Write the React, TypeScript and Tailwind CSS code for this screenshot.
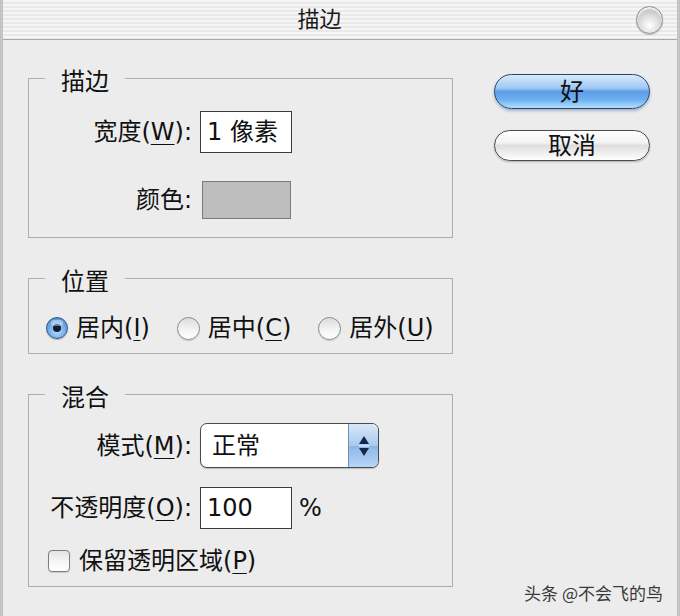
import React from "react";

type GroupBoxProps = {
  title: string;
  children: React.ReactNode;
  className?: string;
};

function GroupBox({ title, children, className = "" }: GroupBoxProps) {
  return (
    <fieldset className={`w-[425px] border border-[#adadad] ${className}`}>
      <legend className="ml-[16px] px-[16px] pt-[8px] text-[24px] leading-[28px] text-[#111]">
        {title}
      </legend>
      {children}
    </fieldset>
  );
}

function Mn({ children }: { children: React.ReactNode }) {
  return <span className="underline decoration-1 underline-offset-[4px]">{children}</span>;
}

function FieldLabel({ children }: { children: React.ReactNode }) {
  return (
    <div className="w-[163px] shrink-0 text-right text-[24px] leading-[28px] text-[#111]">
      {children}
    </div>
  );
}

function Radio({ checked }: { checked?: boolean }) {
  if (checked) {
    return (
      <span className="relative flex h-[22px] w-[22px] shrink-0 items-center justify-center rounded-full border border-[#34598a] bg-[radial-gradient(circle_at_50%_65%,#b9dcfb_0%,#6ea7e6_55%,#3f78c2_100%)] shadow-[0_1px_1px_rgba(0,0,0,0.25)]">
        <span className="h-[8px] w-[8px] rounded-full bg-[#0c1d3a]" />
        {/* gloss */}
        <span className="absolute left-[4px] top-[2px] h-[6px] w-[12px] rounded-full bg-white/40" />
      </span>
    );
  }
  return (
    <span className="relative h-[23px] w-[23px] shrink-0 rounded-full border border-[#8c8c8c] bg-[linear-gradient(to_bottom,#dcdcdc,#f3f3f3_55%,#ffffff)] shadow-[0_1px_1px_rgba(0,0,0,0.15)]" />
  );
}

function RadioItem({ checked, children }: { checked?: boolean; children: React.ReactNode }) {
  return (
    <div className="flex items-center gap-[8px]">
      <Radio checked={checked} />
      <span className="text-[24px] leading-[28px] text-[#111]">{children}</span>
    </div>
  );
}

export default function App() {
  return (
    <div className="relative h-[616px] w-[680px] overflow-hidden border-x-[3px] border-[#c4c4c4] bg-[#ececec] font-['DejaVu_Sans','Noto_Sans_CJK_SC',sans-serif]">
      {/* Title bar */}
      <div className="flex h-[40px] items-center border-b border-[#a8a8a8] bg-[repeating-linear-gradient(to_bottom,#f6f6f6_0px,#f6f6f6_2px,#e9e9e9_2px,#e9e9e9_4px)]">
        <div className="flex-1 text-center text-[22px] leading-[28px] text-[#1a1a1a]">描边</div>
        <div className="mr-[14px] h-[28px] w-[27px] rounded-full border border-[#8e8e8e] bg-[radial-gradient(circle_at_50%_70%,#ffffff_0%,#dcdcdc_45%,#a9a9a9_100%)] shadow-[inset_0_2px_2px_rgba(255,255,255,0.9),0_1px_1px_rgba(0,0,0,0.2)]" />
      </div>

      <div className="flex items-start pl-[25px]">
        {/* Left column */}
        <div className="flex flex-col gap-[22px] pt-[20px]">
          <GroupBox title="描边">
            <div className="flex flex-col pb-[18px] pt-[15px]">
              <div className="flex items-center gap-[8px]">
                <FieldLabel>
                  宽度(<Mn>W</Mn>):
                </FieldLabel>
                <div className="flex h-[42px] w-[92px] items-center border border-[#3c3c3c] bg-white pl-[6px] text-[24px] leading-[28px] text-[#111]">
                  1 像素
                </div>
              </div>
              <div className="mt-[28px] flex items-center gap-[10px]">
                <FieldLabel>颜色:</FieldLabel>
                <div className="h-[38px] w-[89px] border border-[#7a7a7a] bg-[#bdbdbd]" />
              </div>
            </div>
          </GroupBox>

          <GroupBox title="位置">
            <div className="flex items-center gap-[27px] pb-[11px] pl-[17px] pt-[18px]">
              <RadioItem checked>
                居内(<Mn>I</Mn>)
              </RadioItem>
              <RadioItem>
                居中(<Mn>C</Mn>)
              </RadioItem>
              <RadioItem>
                居外(<Mn>U</Mn>)
              </RadioItem>
            </div>
          </GroupBox>

          <GroupBox title="混合">
            <div className="flex flex-col pb-[11px] pt-[11px]">
              <div className="flex items-center gap-[8px]">
                <FieldLabel>
                  模式(<Mn>M</Mn>):
                </FieldLabel>
                <div className="flex h-[45px] w-[179px] overflow-hidden rounded-[7px] border border-[#4a4a4a] bg-white shadow-[0_1px_1px_rgba(0,0,0,0.2)]">
                  <div className="flex flex-1 items-center pl-[11px] text-[24px] leading-[28px] text-[#111]">
                    正常
                  </div>
                  <div className="flex w-[30px] items-center justify-center border-l border-[#6f8fb8] bg-[linear-gradient(to_bottom,#d8e8fa,#a9c9ee_50%,#8cb6e8_51%,#b7d6f6)]">
                    <svg width="12" height="22" viewBox="0 0 12 22">
                      <path d="M6 1 L11 9 L1 9 Z" fill="#14284a" />
                      <line x1="1" y1="11" x2="11" y2="11" stroke="#e8f1fb" strokeWidth="1" />
                      <path d="M1 13 L11 13 L6 21 Z" fill="#14284a" />
                    </svg>
                  </div>
                </div>
              </div>

              <div className="mt-[19px] flex items-center gap-[8px]">
                <FieldLabel>
                  不透明度(<Mn>O</Mn>):
                </FieldLabel>
                <div className="flex h-[42px] w-[92px] items-center border border-[#3c3c3c] bg-white pl-[6px] text-[24px] leading-[28px] text-[#111]">
                  100
                </div>
                <span className="ml-[-1px] text-[24px] leading-[28px] text-[#111]">%</span>
              </div>

              <div className="mt-[18px] flex items-center gap-[9px] pl-[19px]">
                <span className="h-[22px] w-[22px] shrink-0 rounded-[4px] border border-[#7d7d7d] bg-[linear-gradient(to_bottom,#e4e4e4,#f7f7f7_60%,#ffffff)] shadow-[0_1px_1px_rgba(0,0,0,0.15)]" />
                <span className="text-[24px] leading-[28px] text-[#111]">
                  保留透明区域(<Mn>P</Mn>)
                </span>
              </div>
            </div>
          </GroupBox>
        </div>

        {/* Buttons */}
        <div className="ml-[41px] flex flex-col gap-[21px] pt-[34px]">
          <button className="flex h-[35px] w-[156px] items-center justify-center rounded-full border border-[#27466f] bg-[linear-gradient(to_bottom,#d8eafc_0%,#9fc7f3_40%,#5e9de8_50%,#6eb0f0_75%,#b5defe_100%)] text-[24px] leading-[28px] text-[#111] shadow-[0_2px_3px_rgba(30,70,130,0.35)]">
            好
          </button>
          <button className="flex h-[31px] w-[156px] items-center justify-center rounded-full border border-[#4d4d4d] bg-[linear-gradient(to_bottom,#ffffff_0%,#f3f3f3_40%,#dedede_50%,#eeeeee_75%,#ffffff_100%)] text-[24px] leading-[28px] text-[#111] shadow-[0_1px_2px_rgba(0,0,0,0.25)]">
            取消
          </button>
        </div>
      </div>

      {/* Watermark */}
      <div className="absolute bottom-[11px] right-[14px] font-['Noto_Sans_CJK_SC',sans-serif] text-[17px] leading-[24px] text-[#3a3a3a]">
        头条 @不会飞的鸟
      </div>
    </div>
  );
}
